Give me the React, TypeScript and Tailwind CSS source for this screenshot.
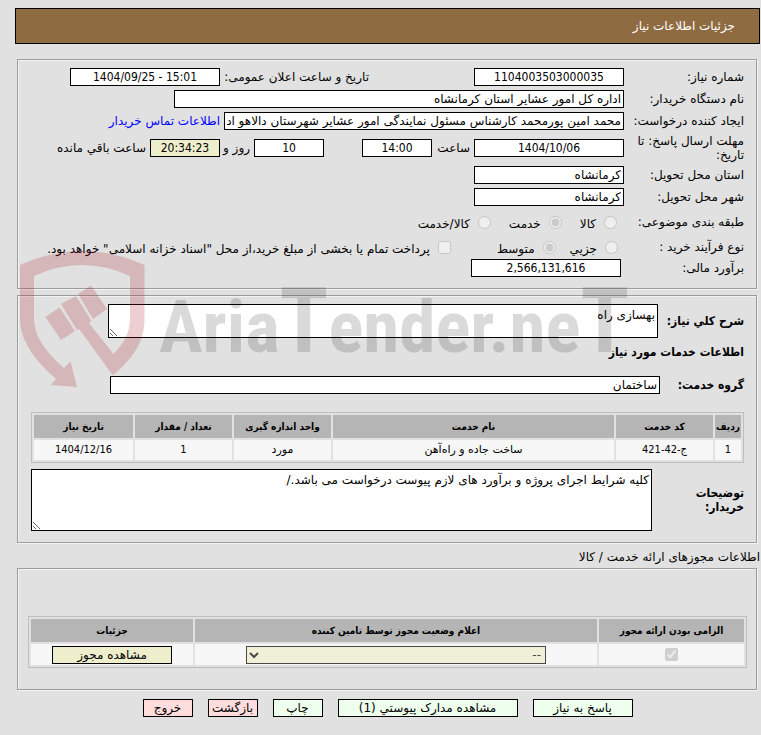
import React from 'react';

const fieldClass =
  'h-[18px] rounded-none border border-black px-[2px] py-0 text-xs leading-4 text-black outline-none';

interface FieldProps {
  id: string;
  value: string;
  className?: string;
  dir?: 'ltr' | 'rtl';
  label?: string;
}

const Field: React.FC<FieldProps> = ({ id, value, className = '', dir = 'rtl', label }) => (
  <input id={id} type="text" dir={dir} readOnly aria-label={label} defaultValue={value} className={`${fieldClass} ${className}`} />
);

const RowLabel: React.FC<{ htmlFor: string; children: React.ReactNode }> = ({ htmlFor, children }) => (
  <label htmlFor={htmlFor} className="w-[120px] shrink-0 pl-2 leading-[14px]">
    {children}
  </label>
);

const Radio: React.FC<{ id: string; name: string; text: string; checked?: boolean }> = ({ id, name, text, checked }) => (
  <span className="flex items-center gap-2">
    <input id={id} type="radio" name={name} disabled defaultChecked={checked} className="m-0 h-[13px] w-[13px]" />
    <label htmlFor={id} className="pt-1">{text}</label>
  </span>
);

const numberClass = "bg-white text-center font-['DejaVu_Sans_Condensed','DejaVu_Sans',sans-serif]";
const boldClass = "font-['DejaVu_Sans_Condensed','DejaVu_Sans',sans-serif] font-bold";
const panelClass = 'ml-[2px] mr-[3px] min-w-0 border border-[#9c9c9c] shadow-[1px_1px_0_#f3f3f3,inset_1px_1px_0_#f3f3f3]';
const thClass = `h-[23px] bg-[#b5b5b5] p-0 text-center text-[10px] leading-[14px] ${boldClass}`;
const tdClass = 'h-5 bg-[#f7f7f7] p-0 text-center text-[11px]';
const numberTdClass = `${tdClass} font-['DejaVu_Sans_Condensed','DejaVu_Sans',sans-serif]`;
const licenseTdClass = 'h-[21px] bg-[#f7f7f7] p-0 text-center text-[11px]';
const tableClass = 'w-full table-fixed border-separate border-spacing-[2px] border border-[#bebebe]';
const buttonClass = 'h-[18px] whitespace-nowrap border border-black text-xs leading-4 text-black';

const services = [
  { row: '1', code: 'ج-42-421', name: 'ساخت جاده و راه‌آهن', unit: 'مورد', count: '1', date: '1404/12/16' },
];

const actions = [
  { text: 'پاسخ به نیاز', style: 'w-[100px] bg-[#eeffee]' },
  { text: 'مشاهده مدارک پیوستي (1)', style: 'w-[180px] bg-[#eeffee]' },
  { text: 'چاپ', style: 'w-[50px] bg-[#eeffee]' },
  { text: 'بازگشت', style: 'w-[50px] bg-[#ffdddd]' },
  { text: 'خروج', style: 'w-[50px] bg-[#ffdddd]' },
];

const Watermark = () => (
  <svg
    viewBox="15 245 620 150"
    className="pointer-events-none absolute left-[15px] top-[245px] h-[150px] w-[620px]"
    aria-hidden="true"
  >
    <g fill="#aa1423" opacity="0.2">
      <path d="M20 265 Q82 237 144.500 265 V318 C144.500 342 134 357 113 375.500 L79 329 L77 330 L61 304 L76 296 L91.500 321 L89 323 L113.500 354 C124 343 130 333 130 318 V276 Q82 254 34 276 V318 C34 338 48 354 64 368 L70.500 361.500 L77 387 L50.500 385 L56 379 C36 361 20 342 20 318 Z" />
      <path d="M45.500 317 L59.500 307.500 L75 331 L61 340 Z" />
      <path d="M78 294 L91 285.500 L107 309 L93 319 Z" />
    </g>
    <text
      x="159"
      y="352"
      direction="ltr"
      opacity="0.14"
      fill="#000000"
      className="font-['Roboto_Condensed',Roboto,sans-serif] text-[73px] font-bold"
    >
      Aria<tspan fontSize="90">T</tspan>ender.ne<tspan fontSize="90">T</tspan>
    </text>
  </svg>
);

export default function App() {
  return (
    <div
      dir="rtl"
      className="relative min-h-screen overflow-hidden bg-[#e1e1e1] pb-4 pl-[15px] pr-px pt-2 font-['DejaVu_Sans',sans-serif] text-xs leading-[14px] text-black"
    >
      <h1 className="mb-[15px] flex h-9 items-center border border-black bg-[#8f6b41] pr-6 text-xs font-normal text-white">
        جزئیات اطلاعات نیاز
      </h1>

      <fieldset className={`${panelClass} pb-[10px] pr-3 pt-[6px]`}>
        <div className="flex h-[22px] items-center">
          <RowLabel htmlFor="need-no">شماره نیاز:</RowLabel>
          <Field id="need-no" value="1104003503000035" className={`w-[150px] ${numberClass}`} />
          <label htmlFor="announce" className="mr-[105px] w-[149px] whitespace-nowrap">تاریخ و ساعت اعلان عمومی:</label>
          <Field id="announce" value="1404/09/25 - 15:01" dir="ltr" className={`w-[150px] ${numberClass}`} />
        </div>
        <div className="flex h-[22px] items-center">
          <RowLabel htmlFor="org">نام دستگاه خریدار:</RowLabel>
          <Field id="org" value="اداره کل امور عشایر استان کرمانشاه" className="w-[450px] bg-white" />
        </div>
        <div className="flex h-[22px] items-center">
          <RowLabel htmlFor="creator">ایجاد کننده درخواست:</RowLabel>
          <Field
            id="creator"
            value="محمد امین پورمحمد کارشناس مسئول نمایندگی امور عشایر شهرستان دالاهو اداره کل امور عشایر استان کرمانشاه"
            className="w-[400px] bg-white"
          />
          <a href="#contact" className="mr-1 whitespace-nowrap text-[#0000ff]">اطلاعات تماس خریدار</a>
        </div>
        <div className="flex h-8 items-center">
          <RowLabel htmlFor="deadline">مهلت ارسال پاسخ: تا تاریخ:</RowLabel>
          <Field id="deadline" value="1404/10/06" className={`w-[150px] ${numberClass}`} />
          <label htmlFor="hour" className="w-[42px] pr-1">ساعت</label>
          <Field id="hour" value="14:00" className={`w-[70px] ${numberClass}`} />
          <Field id="days" value="10" label="روز" className={`mr-[38px] w-[70px] ${numberClass}`} />
          <label htmlFor="remain" className="w-[34px] whitespace-nowrap pr-1">روز و</label>
          <Field
            id="remain"
            value="20:34:23"
            className="w-[70px] bg-[#eeeecc] text-center font-['DejaVu_Sans_Condensed','DejaVu_Sans',sans-serif]"
          />
          <span className="mr-1 whitespace-nowrap">ساعت باقي مانده</span>
        </div>
        <div className="flex h-[22px] items-center">
          <RowLabel htmlFor="province">استان محل تحویل:</RowLabel>
          <Field id="province" value="کرمانشاه" className="w-[150px] bg-white" />
        </div>
        <div className="flex h-[22px] items-center">
          <RowLabel htmlFor="city">شهر محل تحویل:</RowLabel>
          <Field id="city" value="کرمانشاه" className="w-[150px] bg-white" />
        </div>
        <div className="flex h-7 items-center">
          <span className="w-[127px] shrink-0">طبقه بندی موضوعی:</span>
          <div className="flex gap-[18px]">
            <Radio id="goods" name="subject" text="کالا" />
            <Radio id="service" name="subject" text="خدمت" checked />
            <Radio id="both" name="subject" text="کالا/خدمت" />
          </div>
        </div>
        <div className="flex h-[22px] items-center">
          <span className="w-[126px] shrink-0">نوع فرآیند خرید :</span>
          <div className="flex gap-[14px]">
            <Radio id="minor" name="process" text="جزیي" />
            <Radio id="medium" name="process" text="متوسط" checked />
          </div>
          <span className="mr-[46px] flex items-center gap-2">
            <input id="treasury" type="checkbox" disabled className="m-0 h-[13px] w-[13px]" />
            <label htmlFor="treasury" className="whitespace-nowrap pt-1">
              پرداخت تمام یا بخشی از مبلغ خرید،از محل "اسناد خزانه اسلامی" خواهد بود.
            </label>
          </span>
        </div>
        <div className="flex h-5 items-center">
          <label htmlFor="estimate" className="w-[123px] shrink-0">برآورد مالی:</label>
          <Field id="estimate" value="2,566,131,616" className={`w-[150px] ${numberClass}`} />
        </div>
      </fieldset>

      <fieldset className={`${panelClass} mt-[6px] pb-[11px] pl-[13px] pr-3 pt-2`}>
        <div className="flex items-center">
          <label htmlFor="summary" className={`w-[86px] shrink-0 whitespace-nowrap ${boldClass}`}>شرح کلي نیاز:</label>
          <textarea
            id="summary"
            readOnly
            defaultValue="بهسازی راه"
            className="h-[34px] w-[550px] rounded-none border border-black bg-white p-[2px] text-xs leading-4"
          />
        </div>
        <h2 className={`mt-[7px] text-xs leading-[14px] ${boldClass}`}>اطلاعات خدمات مورد نیاز</h2>
        <div className="mt-[17px] flex items-center">
          <label htmlFor="group" className={`w-[84px] shrink-0 ${boldClass}`}>گروه خدمت:</label>
          <Field id="group" value="ساختمان" className="w-[550px] bg-white" />
        </div>
        <table className={`${tableClass} mt-[18px]`}>
          <thead>
            <tr>
              <th className={`${thClass} w-[26px]`}>ردیف</th>
              <th className={`${thClass} w-[97px]`}>کد خدمت</th>
              <th className={thClass}>نام خدمت</th>
              <th className={`${thClass} w-[97px]`}>واحد اندازه گیری</th>
              <th className={`${thClass} w-[97px]`}>تعداد / مقدار</th>
              <th className={`${thClass} w-[99px]`}>تاریخ نیاز</th>
            </tr>
          </thead>
          <tbody>
            {services.map((item) => (
              <tr key={item.row}>
                <td className={numberTdClass}>{item.row}</td>
                <td className={numberTdClass}>{item.code}</td>
                <td className={tdClass}>{item.name}</td>
                <td className={tdClass}>{item.unit}</td>
                <td className={numberTdClass}>{item.count}</td>
                <td className={numberTdClass}>{item.date}</td>
              </tr>
            ))}
          </tbody>
        </table>
        <div className="mt-[6px] flex items-center">
          <label htmlFor="notes" className={`w-[92px] shrink-0 pl-8 ${boldClass}`}>توضیحات خریدار:</label>
          <textarea
            id="notes"
            readOnly
            defaultValue="کلیه شرایط اجرای پروژه و برآورد های لازم پیوست درخواست می باشد./"
            className="h-[62px] min-w-0 flex-1 rounded-none border border-black bg-white p-[2px] text-xs leading-4"
          />
        </div>
      </fieldset>

      <h2 className="mb-1 mt-[7px] text-xs font-normal leading-[14px]">اطلاعات مجوزهای ارائه خدمت / کالا</h2>

      <fieldset className={`${panelClass} pb-[21px] pl-[10px] pr-[9px] pt-[47px]`}>
        <table className={tableClass}>
          <thead>
            <tr>
              <th className={`${thClass} w-[145px]`}>الزامی بودن ارائه مجوز</th>
              <th className={thClass}>اعلام وضعیت مجوز توسط تامین کننده</th>
              <th className={`${thClass} w-[162px]`}>جزئیات</th>
            </tr>
          </thead>
          <tbody>
            <tr>
              <td className={licenseTdClass}>
                <input type="checkbox" disabled defaultChecked aria-label="الزامی بودن ارائه مجوز" className="mx-auto block h-[13px] w-[13px]" />
              </td>
              <td className={licenseTdClass}>
                <select
                  disabled
                  aria-label="اعلام وضعیت مجوز"
                  className="mx-auto block h-[18px] w-[300px] rounded-none border border-black bg-[#eeeecc] text-xs leading-4 text-black opacity-70"
                >
                  <option>--</option>
                </select>
              </td>
              <td className={licenseTdClass}>
                <button type="button" className={`${buttonClass} mx-auto block w-[120px] bg-[#eeeecc]`}>مشاهده مجوز</button>
              </td>
            </tr>
          </tbody>
        </table>
      </fieldset>

      <div className="mt-[9px] flex justify-center gap-[15px]">
        {actions.map((action) => (
          <button key={action.text} type="button" className={`${buttonClass} ${action.style}`}>
            {action.text}
          </button>
        ))}
      </div>

      <Watermark />
    </div>
  );
}
